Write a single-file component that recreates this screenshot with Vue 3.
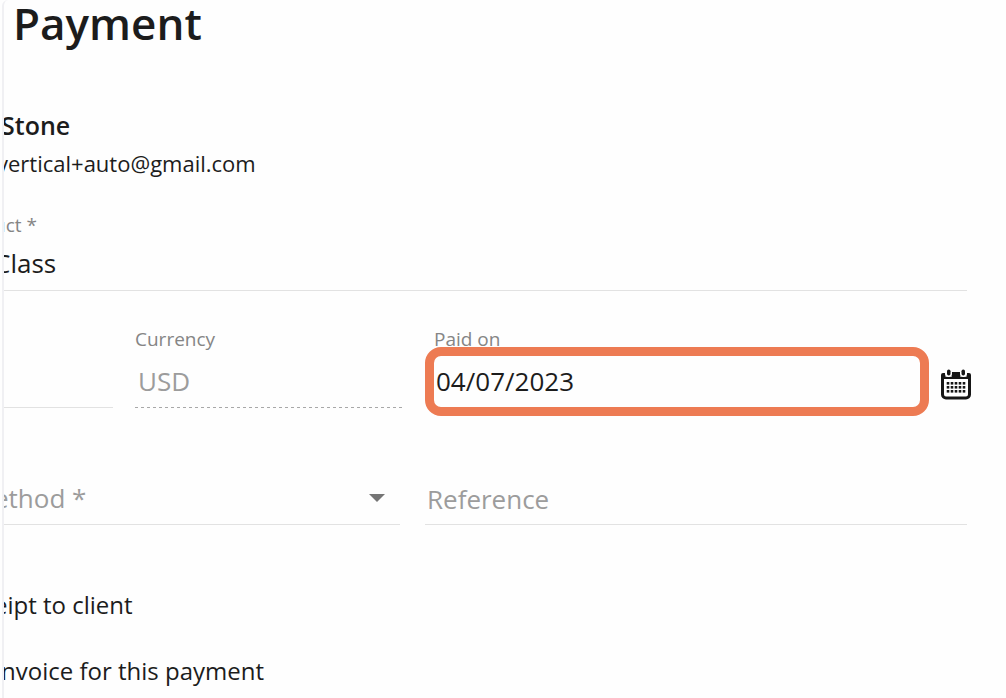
<script setup>
import { ref } from 'vue'

const product = ref('Class')
const amount = ref('')
const currency = ref('USD')
const paidOn = ref('04/07/2023')
const method = ref('')
const reference = ref('')

const dots = []
for (let row = 0; row < 3; row++) {
  for (let col = 0; col < 5; col++) {
    dots.push({ x: 5.7 + col * 4, y: 13 + row * 4 })
  }
}
</script>

<template>
  <div class="page">
    <main class="panel">
      <h1>Payment</h1>

      <section class="client">
        <h2 class="cut-small">Stone</h2>
        <p class="email cut-medium">vertical+auto@gmail.com</p>
      </section>

      <form @submit.prevent>
        <div class="field product cut-large">
          <label for="product">uct *</label>
          <input id="product" v-model="product" type="text" />
        </div>

        <div class="row amounts">
          <div class="field spaced">
            <input v-model="amount" type="text" aria-label="Amount" />
          </div>
          <div class="field spaced">
            <label for="currency">Currency</label>
            <input id="currency" v-model="currency" class="inset dashed" type="text" disabled />
          </div>
          <div class="field spaced date">
            <label for="paid-on">Paid on</label>
            <div class="date-line">
              <input id="paid-on" v-model="paidOn" type="text" />
              <button type="button" aria-label="Open calendar">
                <svg viewBox="0 0 30 31" width="30" height="31" aria-hidden="true">
                  <rect x="1.5" y="6" width="27" height="23" rx="3.5" fill="#fff" stroke="#161616" stroke-width="3" />
                  <path d="M0 6Q0 4 2 4H4V8H11V3H19V8H26V4H28Q30 4 30 6V10H0Z" fill="#161616" />
                  <rect x="4" y="0" width="7" height="8" rx="3" fill="#fff" />
                  <rect x="19" y="0" width="7" height="8" rx="3" fill="#fff" />
                  <rect x="6" y="0.500" width="3.500" height="6" rx="1.700" fill="#161616" />
                  <rect x="20.500" y="0.500" width="3.500" height="6" rx="1.700" fill="#161616" />
                  <rect v-for="d in dots" :key="`${d.x}-${d.y}`" :x="d.x" :y="d.y" width="2.600" height="2.600" fill="#161616" />
                </svg>
              </button>
              <span class="ring"></span>
            </div>
          </div>
        </div>

        <div class="row details">
          <div class="select-wrap cut-large">
            <select v-model="method" aria-label="Payment method">
              <option value="">ethod *</option>
            </select>
            <svg class="arrow" viewBox="0 0 16 8" width="16" height="8" aria-hidden="true">
              <path d="M0 0H16L8 8Z" fill="#757575" />
            </svg>
          </div>
          <div class="field">
            <input v-model="reference" type="text" placeholder="Reference" aria-label="Reference" />
          </div>
        </div>

        <div class="choices">
          <p class="cut-large">eipt to client</p>
          <p class="cut-small">nvoice for this payment</p>
        </div>
      </form>
    </main>
  </div>
</template>

<style>
body {
  margin: 0;
  background: #fefefe;
}
</style>

<style scoped>
.page {
  padding-left: 2px;
  font-family: "Open Sans", "Noto Sans", sans-serif;
  color: #1c1c1c;
}

.panel {
  min-height: 100vh;
  box-sizing: border-box;
  border-left: 2px solid #f0f0f3;
  border-top-left-radius: 6px;
  padding-right: 39px;
  overflow: hidden;
}

h1,
h2,
p {
  margin: 0;
}

h1 {
  padding-left: 9px;
  font-size: 44px;
  line-height: 46px;
  font-weight: 600;
}

.cut-small {
  margin-left: -3px;
}

.cut-medium {
  margin-left: -7px;
}

.cut-large {
  margin-left: -10px;
}

.client {
  margin-top: 63px;
}

h2 {
  font-size: 25px;
  line-height: 32px;
  font-weight: 600;
}

.email {
  margin-top: 6px;
  font-size: 22px;
  line-height: 32px;
}

.product {
  margin-top: 33px;
}

.field {
  display: flex;
  flex-direction: column;
  justify-content: flex-end;
  min-width: 0;
}

label {
  font-size: 19px;
  line-height: 26px;
  color: #858585;
}

input,
select {
  width: 100%;
  min-width: 0;
  height: 53px;
  box-sizing: border-box;
  margin: 0;
  padding: 0;
  border: 0;
  border-bottom: 1px solid #e2e2e2;
  border-radius: 0;
  outline: 0;
  background: transparent;
  font-family: inherit;
  font-size: 26px;
  color: #1c1c1c;
}

.product input {
  padding-bottom: 2px;
}

.row {
  display: grid;
  column-gap: 22px;
}

.amounts {
  grid-template-columns: 109fr 268fr 542fr;
  margin-top: 35px;
}

.spaced label {
  margin-bottom: 3px;
}

.inset {
  padding: 0 0 2px 3px;
}

.dashed {
  border-bottom: 0;
  background: repeating-linear-gradient(to right, #a8a8a8 0 3px, transparent 3px 6px) left bottom / 100% 1px no-repeat;
}

input:disabled {
  color: #9c9c9c;
}

.date label {
  padding-left: 9px;
}

.date-line {
  position: relative;
  display: flex;
}

.date-line input {
  flex: 1;
  padding-left: 11px;
  border-color: transparent;
}

.date-line button {
  display: flex;
  align-items: center;
  margin: 5px -4px 0 0;
  padding: 0;
  border: 0;
  background: none;
}

.ring {
  position: absolute;
  inset: -8px 38px -8px 0;
  border: 9px solid #ed7b53;
  border-radius: 16px;
  pointer-events: none;
}

.details {
  grid-template-columns: 396fr 542fr;
  column-gap: 25px;
  margin-top: 64px;
}

.details .field input {
  height: 53px;
  padding: 2px 0 0 2px;
}

.details .field input::placeholder {
  color: #9c9c9c;
  opacity: 1;
}

.select-wrap {
  position: relative;
}

select {
  display: block;
  appearance: none;
  color: #9c9c9c;
}

.arrow {
  position: absolute;
  right: 15px;
  top: 22px;
}

.choices {
  display: grid;
  row-gap: 32px;
  margin-top: 63px;
  font-size: 24px;
  line-height: 34px;
}
</style>
